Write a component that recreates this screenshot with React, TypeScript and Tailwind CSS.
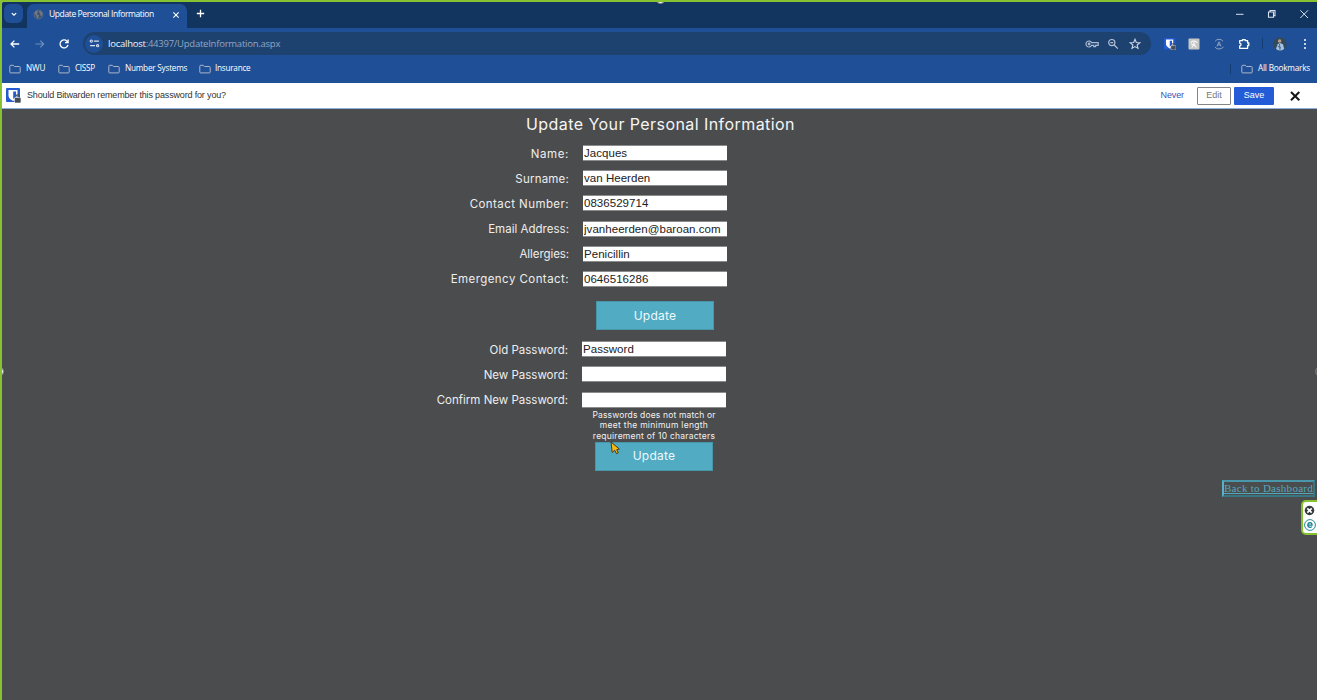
import type { ReactNode } from "react";

const UI = "font-['Open_Sans','Noto_Sans',sans-serif]";
const GOTHIC = "font-['Inter','Lato',sans-serif]";
const ARIAL = "font-['Liberation_Sans',sans-serif]";

function Icon({ children, className = "" }: { children: ReactNode; className?: string }) {
  return (
    <svg viewBox="0 0 12 12" fill="none" stroke="currentColor" strokeWidth="1.2" className={`size-3 shrink-0 ${className}`}>
      {children}
    </svg>
  );
}

function Folder({ className = "" }: { className?: string }) {
  return (
    <Icon className={`text-[#aab4c6] ${className}`}>
      <path d="M.8 3.2Q.8 2.3 1.6 2.3H4.3L5.4 3.5H10.4Q11.2 3.5 11.2 4.3V9.1Q11.2 9.9 10.4 9.9H1.6Q.8 9.9 .8 9.1Z" strokeWidth="1" />
    </Icon>
  );
}

function Shield({ className = "" }: { className?: string }) {
  return (
    <svg viewBox="0 0 15 15" className={`shrink-0 ${className}`}>
      <rect width="14" height="14" rx="1" fill="#245bd1" />
      <path d="M2.5 2H11.5V7.5Q11.5 10.5 7 13Q2.5 10.5 2.5 7.5Z" fill="#fff" />
      <path d="M7.2 3.5H10V7.4Q10 9.5 7.2 11Z" fill="#245bd1" />
      <rect x="8.5" y="9.5" width="6.5" height="5.5" rx="1" fill="#444b52" stroke="#fff" strokeWidth=".6" />
      <path d="M9.9 9.3V8.2Q9.9 6.9 11.7 6.9Q13.4 6.9 13.4 8.2V9.3" fill="none" stroke="#444b52" strokeWidth="1.1" />
    </svg>
  );
}

function TabStrip() {
  return (
    <div className="flex h-[26px] w-full bg-[#12355f] text-white">
      <div className="ml-[2px] mt-[2px] flex h-[19px] w-[19px] items-center justify-center rounded-[6px] bg-[#1f5097]">
        <Icon className="!size-[10px]"><path d="M3.4 5L6 7.5L8.6 5" strokeWidth="1.5" /></Icon>
      </div>
      <div className="ml-1 mt-[2px] flex h-6 w-[160px] items-center rounded-t-[7px] bg-[#1f5097]">
        <svg viewBox="0 0 12 12" className="ml-[6px] mt-[-3px] size-[11px]">
          <circle cx="6" cy="6" r="4.9" fill="#3c5476" stroke="#6b7180" strokeWidth=".8" />
          <path d="M1.8 5L3 2.5L5 1.8L5.5 3.5L4 4.5L4.5 6L6.5 7L5.5 10L4 9.5L3.8 7.5ZM7 2L9.5 3L10.3 6L9 8L7.8 6.5L8.2 4.8L6.8 4Z" fill="#777b82" />
        </svg>
        <span className="ml-[5px] mt-[-3px] w-[122px] whitespace-nowrap text-[8.5px] tracking-[-0.39px]">Update Personal Information</span>
        <Icon className="!size-[10px] mt-[-3px]"><path d="M2.8 2.8L9.2 9.2M9.2 2.8L2.8 9.2" strokeWidth="1.3" /></Icon>
      </div>
      <Icon className="!size-[11px] ml-2 mt-[6px]"><path d="M6 2V10M2 6H10" strokeWidth="1.4" /></Icon>
      <div className="ml-auto mr-[7px] mt-[6px] flex gap-[20px] text-[#d8e0eb]">
        <Icon><path d="M2 6.3H9.5" strokeWidth="1" /></Icon>
        <Icon><path d="M2.5 4H7.5V9.3H2.5ZM4 4V2.5H9V7.6H7.5" strokeWidth="1.1" /></Icon>
        <Icon><path d="M2.3 2.3L10 10M10 2.3L2.3 10" strokeWidth="1" /></Icon>
      </div>
    </div>
  );
}

function Toolbar() {
  return (
    <div className="flex h-[31px] w-full items-center pl-[7px] pr-[6px] text-[#d8e1f0]">
      <Icon className="text-white"><path d="M10.2 6H2.2M5.4 2.6L2 6L5.4 9.4" strokeWidth="1.3" /></Icon>
      <Icon className="ml-[13px] text-[#718fc0]"><path d="M1.5 6H9.5M6.3 2.6L9.7 6L6.3 9.4" strokeWidth="1.1" /></Icon>
      <Icon className="ml-3 text-white"><path d="M10 6.8A4 4 0 1 1 9 3.2L10 4.2M10.1 1.5V4.6H7" strokeWidth="1.3" /></Icon>
      <div className="ml-[13px] flex h-[23px] w-[1068px] items-center rounded-full bg-[#1e426f] pl-[2px] pr-[10px]">
        <div className="flex size-[18px] items-center justify-center rounded-full bg-[#1f5097]">
          <Icon className="!size-[11px]"><path d="M5.3 3.4H10.8M1.2 8.4H6.6" strokeWidth="1.4" /><circle cx="2.5" cy="3.4" r="1.2" /><circle cx="9.4" cy="8.4" r="1.2" /></Icon>
        </div>
        <span className="ml-[5px] whitespace-nowrap text-[9.5px] leading-none tracking-[-0.24px] text-[#91a6c4]"><span className="text-[#eef3fb]">localhost</span>:44397/UpdateInformation.aspx</span>
        <svg viewBox="0 0 14 12" fill="none" stroke="currentColor" strokeWidth="1.2" className="ml-auto h-3 w-[14px] text-[#a9bad2]"><path d="M6.7 4.7A3 3 0 1 0 6.7 7.3H8.7V8.6H10.6V7.3H13.2V4.7Z" /><circle cx="4.1" cy="6" r=".8" /></svg>
        <Icon className="ml-[8px] text-[#b5c3d9]"><circle cx="4.8" cy="4.6" r="3.1" /><path d="M7.2 7L10.8 10.7M3.4 4.6H6.2" /></Icon>
        <Icon className="ml-[10px] text-[#c9d5e6]"><path d="M6 1.3L7.3 4.5L10.8 4.8L8.1 7L9 10.4L6 8.6L3 10.4L3.9 7L1.2 4.8L4.7 4.5Z" strokeWidth="1.1" /></Icon>
      </div>
      <Shield className="ml-[13px] size-3" />
      <svg viewBox="0 0 12 12" className="ml-3 size-3"><rect x=".5" y=".5" width="11" height="11" rx="1" fill="#c5c7c6" /><path d="M2.7 4.8L4.5 3H7L9.3 4.8M6 3V6L3.8 9.5M6 6L8.3 9.5M3 6.3H6" fill="none" stroke="#f4f4f4" strokeWidth="1.1" /></svg>
      <Icon className="ml-[13px] text-[#9cabbf]"><path d="M2.2 3.2Q3.5 1.3 6 1.3Q8.5 1.3 10 3.2M2 9.2Q3.5 11 6 11Q8.5 11 10.5 9M4 8.4L6 3.8L8 8.4M4.8 6.9H7.2" strokeWidth=".9" /></Icon>
      <Icon className="ml-[13px] text-white"><path d="M1.7 2.7H4.5V1.6H7.2V2.7H9.6V5H10.8V7.5H9.6V10.3H1.7V8Q3 7.8 3 6.5T1.7 5Z" strokeWidth="1.3" strokeLinejoin="round" /></Icon>
      <span className="ml-3 h-[11px] w-px bg-[#143d76]" />
      <svg viewBox="0 0 14 14" className="ml-[10px] size-[14px]">
        <circle cx="7" cy="7" r="6.7" fill="#324a59" /><path d="M3 12L4.5 7.3L7 6L10 7.2L11.2 12Q7 15 3 12Z" fill="#a5c2e3" /><circle cx="6.6" cy="4" r="1.8" fill="#b89b89" /><path d="M6.5 7L7 13M4.5 9L8 11" stroke="#49678b" />
      </svg>
      <Icon className="ml-auto text-white"><g fill="currentColor" stroke="none"><circle cx="6" cy="2" r="1" /><circle cx="6" cy="6" r="1" /><circle cx="6" cy="10" r="1" /></g></Icon>
    </div>
  );
}

function Bookmarks() {
  return (
    <div className="flex h-6 w-full items-center whitespace-nowrap pb-[5px] pl-[7px] text-[8.2px] tracking-[-0.15px] text-white">
      <Folder /><span className="ml-[5px] w-8">NWU</span>
      <Folder /><span className="ml-[5px] w-[33px] tracking-[-0.3px]">CISSP</span>
      <Folder /><span className="ml-[5px] w-[74px] tracking-[-0.22px]">Number Systems</span>
      <Folder /><span className="ml-1 tracking-[-0.25px]">Insurance</span>
      <span className="ml-auto h-[10px] w-px bg-[#143d76]" />
      <Folder className="ml-[10px]" /><span className="ml-[5px] w-[59px] tracking-[-0.2px]">All Bookmarks</span>
    </div>
  );
}

function PasswordBar() {
  return (
    <div className={`flex h-[26px] w-full items-center border-b border-[#8fb0db] bg-white text-[9px] text-[#333] ${ARIAL}`}>
      <Shield className="ml-1 size-[15px]" />
      <span className="ml-[6px] whitespace-nowrap tracking-[-0.16px]">Should Bitwarden remember this password for you?</span>
      <span className="ml-auto tracking-[-0.1px] text-[#4052b5]">Never</span>
      <button className="ml-[13px] h-[18px] w-[34px] rounded-[1px] border border-[#858585] text-[#777]">Edit</button>
      <button className="ml-[3px] h-[18px] w-10 rounded-[1px] bg-[#245bd7] text-white">Save</button>
      <Icon className="ml-[15px] mr-4 text-[#151515]"><path d="M2 2L10.3 10.3M10.3 2L2 10.3" strokeWidth="2" /></Icon>
    </div>
  );
}

type Field = { label: string; value: string; tracking: string };

const details: Field[] = [
  { label: "Name:", value: "Jacques", tracking: "tracking-[0.6px]" },
  { label: "Surname:", value: "van Heerden", tracking: "tracking-[0.2px]" },
  { label: "Contact Number:", value: "0836529714", tracking: "tracking-[0.43px]" },
  { label: "Email Address:", value: "jvanheerden@baroan.com", tracking: "tracking-[0.02px]" },
  { label: "Allergies:", value: "Penicillin", tracking: "tracking-[-0.08px]" },
  { label: "Emergency Contact:", value: "0646516286", tracking: "tracking-[0.44px]" },
];
const passwords: Field[] = [
  { label: "Old Password:", value: "Password", tracking: "" },
  { label: "New Password:", value: "", tracking: "" },
  { label: "Confirm New Password:", value: "", tracking: "" },
];

function FieldRow({ label, value, tracking }: Field) {
  return (
    <div className="flex h-[25.2px] w-full items-start">
      <label className={`mt-[1.5px] w-[569px] whitespace-nowrap text-right text-[11.5px] leading-[14px] text-[#eee] ${GOTHIC} ${tracking}`}>{label}</label>
      <input readOnly value={value} className={`ml-[14px] h-4 w-[144px] border-y border-[#8b8c8d] bg-white px-px text-[11.5px] leading-[14px] tracking-[0.04px] text-[#222] outline-none ${ARIAL}`} />
    </div>
  );
}

function UpdateButton() {
  return <button className={`h-[29px] w-[118px] border border-[#4796a9] bg-[#50abc3] text-[12px] tracking-[0.25px] text-[#eff9fc] ${GOTHIC}`}>Update</button>;
}

export default function App() {
  return (
    <div className={`relative flex h-[700px] w-[1317px] flex-col overflow-hidden border-l-2 border-t-2 border-[#86c232] bg-[#4b4c4d] ${UI}`}>
      <header className="shrink-0 bg-[#1f5097]">
        <TabStrip />
        <Toolbar />
        <Bookmarks />
        <PasswordBar />
      </header>
      <main className="flex flex-1 flex-col">
        <h1 className={`ml-[524px] mt-[5px] whitespace-nowrap text-[16px] leading-[20px] tracking-[0.43px] text-[#f5f5f5] ${GOTHIC}`}>Update Your Personal Information</h1>
        <form className="-ml-[2px] mt-[11px] flex flex-col">
          {details.map((f) => <FieldRow key={f.label} {...f} />)}
          <div className="ml-[596px] mt-[5px] flex h-[40px] items-start"><UpdateButton /></div>
          <div className="-ml-px flex flex-col">{passwords.map((f) => <FieldRow key={f.label} {...f} />)}</div>
          <p className={`-mt-[7px] ml-[582px] h-8 w-[144px] whitespace-nowrap text-center text-[8.5px] leading-[10.5px] text-[#f1f1f1] ${GOTHIC}`}>
            <span className="tracking-[0.15px]">Passwords does not match or</span><br /><span className="tracking-[0.29px]">meet the minimum length</span><br /><span className="tracking-[0.24px]">requirement of 10 characters</span>
          </p>
          <div className="ml-[595px] flex"><UpdateButton /></div>
        </form>
        <a className="ml-auto mr-[2px] mt-[9px] h-[17px] w-[93px] whitespace-nowrap border-2 border-b-[#397681] border-l-[#5ab2c7] border-r-[#397681] border-t-[#4897aa] text-[11px] leading-[13px] tracking-[0.28px] text-[#54a8bd] underline font-['Liberation_Serif',serif]">Back to Dashboard</a>
      </main>
      <div className="absolute left-[1299px] top-[498px] flex h-[35px] w-[22px] flex-col items-start gap-[3px] rounded-l-[5px] border-2 border-[#86c232] bg-white pl-[2px] pt-[3px]">
        <svg viewBox="0 0 12 12" className="-ml-px size-[11px]"><circle cx="6" cy="6" r="5.2" fill="#343b3f" /><path d="M3.6 3.6L8.4 8.4M8.4 3.6L3.6 8.4" stroke="#fff" strokeWidth="1.8" /></svg>
        <svg viewBox="0 0 12 12" className="-ml-px size-3"><circle cx="6" cy="6" r="5.4" fill="#fff" stroke="#258999" strokeWidth="1" /><path d="M3.7 6.1H8.1Q8 3.7 6 3.7Q3.8 3.8 3.8 6.1Q4 8.4 6.2 8.3Q7.5 8.2 8 7.7" fill="none" stroke="#137e90" strokeWidth="1.2" /></svg>
      </div>
      <svg viewBox="0 0 14 14" className="absolute left-[607px] top-[439px] size-[14px]"><path d="M2 1L3.2 11.5L5.7 9.2L7.5 12.7L9.3 11.8L7.7 8.7L10.3 8Z" fill="#f7b90f" stroke="#4b3b19" /></svg>
      <span className="absolute -left-[7px] -top-[7px] size-[9px] rounded-full border border-[#777] bg-white" />
      <span className="absolute -top-[7px] left-[654px] size-[9px] rounded-full border border-[#777] bg-white" />
      <span className="absolute -left-[7px] top-[365px] size-[9px] rounded-full border border-[#777] bg-white" />
      <span className="absolute left-[1313px] top-[365px] size-[9px] rounded-full border border-[#777] bg-[#666]" />
    </div>
  );
}
